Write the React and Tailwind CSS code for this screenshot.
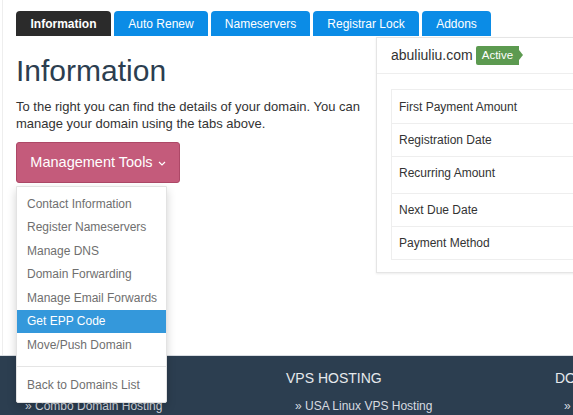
import React from "react";

const tabs = [
  { label: "Information", w: "w-[95px]", active: true },
  { label: "Auto Renew", w: "w-[94px]" },
  { label: "Nameservers", w: "w-[99px]" },
  { label: "Registrar Lock", w: "w-[106px]" },
  { label: "Addons", w: "w-[69px]" },
];

const menu = [
  "Contact Information",
  "Register Nameservers",
  "Manage DNS",
  "Domain Forwarding",
  "Manage Email Forwards",
  "Get EPP Code",
  "Move/Push Domain",
];

const rows = [
  { label: "First Payment Amount", h: "h-[33px]" },
  { label: "Registration Date", h: "h-[33px]" },
  { label: "Recurring Amount", h: "h-[37px] pb-[5px]" },
  { label: "Next Due Date", h: "h-[33px]" },
  { label: "Payment Method", h: "h-[33px]" },
];

export default function App() {
  return (
    <div
      className="relative w-[573px] h-[415px] overflow-hidden bg-white"
      style={{ fontFamily: '"Liberation Sans", Arial, sans-serif' }}
    >
      <div className="h-[355px] ml-[2px] border-l border-[#eeeeee] flex flex-col">
        {/* Tabs */}
        <div className="flex gap-[3px] pl-[13px] pt-[11px]">
          {tabs.map((t) => (
            <div
              key={t.label}
              className={`${t.w} h-[25px] flex items-center justify-center rounded-t-[4px] text-[12px] text-white ${
                t.active ? "bg-[#2b2b2b] font-bold" : "bg-[#0b8ce6]"
              }`}
            >
              {t.label}
            </div>
          ))}
        </div>

        <div className="flex flex-1">
          {/* Left column */}
          <div className="w-[360px] pl-[13px] shrink-0">
            <h1 className="mt-[18px] text-[30px] leading-[34px] text-[#2c3e50]">
              Information
            </h1>
            <p className="mt-[10px] text-[13px] leading-[17px] text-[#333333] w-[352px]">
              To the right you can find the details of your domain. You can manage your domain using the tabs above.
            </p>
            <button className="mt-[10px] w-[164px] h-[41px] rounded-[3px] bg-[#c45b7b] border border-[#ad4867] text-white text-[14.5px] flex items-center justify-center gap-[5px]">
              Management Tools
              <svg width="8" height="5" viewBox="0 0 8 5" className="mt-[2px]">
                <path d="M1 1l3 3 3-3" stroke="white" strokeWidth="1.2" fill="none" />
              </svg>
            </button>
          </div>

          {/* Right panel */}
          <div className="ml-[13px] mt-[1px] h-[236px] flex-1 border border-[#e5e5e5] shadow-[0_1px_2px_rgba(0,0,0,0.08)] bg-white flex flex-col min-w-[260px]">
            <div className="h-[36px] border-b border-[#eeeeee] flex items-center pl-[14px] gap-[3px]">
              <span className="text-[14px] text-[#333333]">abuliuliu.com</span>
              <span className="relative h-[19px] pl-[6px] pr-[6px] bg-[#5c9a50] text-white text-[11.5px] flex items-center rounded-l-[2px]">
                Active
                <span className="absolute right-[-4px] top-[4px] w-0 h-0 border-t-[5px] border-b-[5px] border-l-[4px] border-t-transparent border-b-transparent border-l-[#5c9a50]"></span>
              </span>
            </div>
            <div className="ml-[14px] mt-[15px] border border-[#eeeeee] border-r-0">
              {rows.map((r, i) => (
                <div
                  key={r.label}
                  className={`${r.h} flex items-center pl-[7px] text-[12px] text-[#333333] ${
                    i > 0 ? "border-t border-[#eeeeee]" : ""
                  }`}
                >
                  {r.label}
                </div>
              ))}
            </div>
          </div>
        </div>
      </div>

      {/* Footer */}
      <div className="h-[60px] bg-[#2c3e50] border-t border-[#d9dde2] pl-[16px] grid grid-cols-[270px_269px_270px]">
        <div className="pt-[13px] whitespace-nowrap">
          <div className="h-[18px]"></div>
          <div className="mt-[12px] pl-[9px] text-[12px] leading-[14px] text-[#d7dbe0]">» Combo Domain Hosting</div>
        </div>
        <div className="pt-[13px] whitespace-nowrap">
          <div className="text-[14px] leading-[18px] text-[#e6e9ec]">VPS HOSTING</div>
          <div className="mt-[12px] pl-[9px] text-[12px] leading-[14px] text-[#d7dbe0]">» USA Linux VPS Hosting</div>
        </div>
        <div className="pt-[13px] whitespace-nowrap">
          <div className="text-[14px] leading-[18px] text-[#e6e9ec]">DOMAINS</div>
          <div className="mt-[12px] pl-[9px] text-[12px] leading-[14px] text-[#d7dbe0]">» Domains</div>
        </div>
      </div>

      {/* Dropdown menu */}
      <div className="absolute left-[16px] top-[186px] w-[151px] bg-white border border-[#e3e3e3] rounded-b-[2px] shadow-[0_4px_10px_rgba(0,0,0,0.18)] pt-[5px] pb-[5px]">
        {menu.map((m) => (
          <div
            key={m}
            className={`h-[23.5px] flex items-center pl-[10px] text-[12px] whitespace-nowrap ${
              m === "Get EPP Code" ? "bg-[#3498db] text-white" : "text-[#6f6f6f]"
            }`}
          >
            {m}
          </div>
        ))}
        <div className="mt-[9px] mb-[7px] border-t border-[#e5e5e5]"></div>
        <div className="h-[23.5px] flex items-center pl-[10px] text-[12px] text-[#6f6f6f] whitespace-nowrap">
          Back to Domains List
        </div>
      </div>
    </div>
  );
}
